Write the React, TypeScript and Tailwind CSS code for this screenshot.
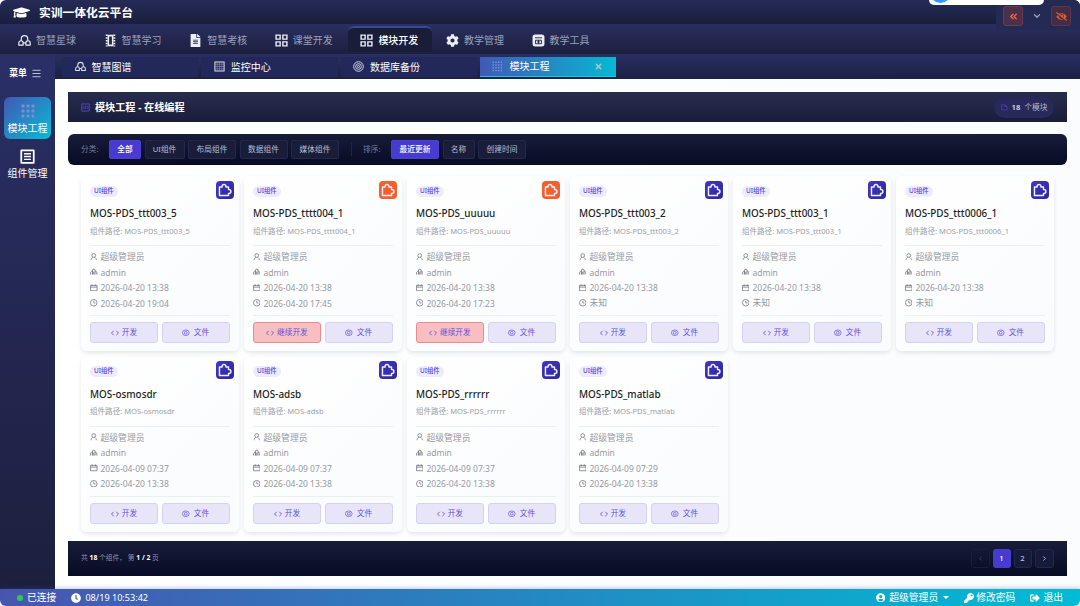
import React from "react";
import { FaGraduationCap, FaFileAlt, FaCog, FaUserCircle, FaKey, FaSignOutAlt, FaClock, FaEyeSlash } from "react-icons/fa";
import { ChevronDown, ChevronLeft, ChevronRight, ChevronsLeft, Menu, X } from "lucide-react";

type IconProps = { className?: string };

const Trefoil = ({ className }: IconProps) => (
  <svg viewBox="0 0 24 24" className={className} fill="none" stroke="currentColor" strokeWidth="2.2" strokeLinejoin="round">
    <path d="M6 12.500V9a6 6 0 0 1 12 0v3.500" />
    <path d="M1.500 20.500v-4a4 4 0 0 1 4-4h0a4 4 0 0 1 4 4v4zM14.500 20.500v-4a4 4 0 0 1 4-4h0a4 4 0 0 1 4 4v4z" />
    <path d="M9.500 16.500h5" />
  </svg>
);

const Grid4 = ({ className }: IconProps) => (
  <svg viewBox="0 0 24 24" className={className} fill="none" stroke="currentColor" strokeWidth="2.6">
    <path d="M2 2h7.5v7.5H2zM14.5 2H22v7.5h-7.5zM2 14.5h7.5V22H2zM14.5 14.5H22V22h-7.5z" />
  </svg>
);

const Film = ({ className }: IconProps) => (
  <svg viewBox="0 0 24 24" className={className} fill="none" stroke="currentColor">
    <path d="M8 3h8v18H8z" strokeWidth="2.8" />
    <path d="M5 1v22M19 1v22" strokeWidth="3.600" strokeDasharray="2.500 2.600" />
  </svg>
);

const Calculator = ({ className }: IconProps) => (
  <svg viewBox="0 0 24 24" className={className}>
    <rect x="1" y="1" width="22" height="22" rx="5" fill="currentColor" />
    <path d="M5.500 7h13M6.500 11.500h11v6.500h-11zM12 11v7M9 14.700h6" stroke="#20264a" strokeWidth="1.700" fill="none" />
  </svg>
);

const Table = ({ className }: IconProps) => (
  <svg viewBox="0 0 24 24" className={className} fill="none" stroke="currentColor">
    <path d="M2 2h20v20H2z" strokeWidth="2.2" />
    <path d="M7 3v18M12 3v18M17 3v18M3 7h18M3 12h18M3 17h18" strokeWidth="1" opacity="0.7" />
  </svg>
);

const Target = ({ className }: IconProps) => (
  <svg viewBox="0 0 24 24" className={className} fill="none" stroke="currentColor" strokeWidth="2">
    <circle cx="12" cy="12" r="10.5" />
    <circle cx="12" cy="12" r="6.2" />
    <circle cx="12" cy="12" r="2.2" />
  </svg>
);

const Dots = ({ className }: IconProps) => (
  <svg viewBox="0 0 24 24" className={className} fill="currentColor">
    {[1, 7, 13, 19].map((y) => [1, 7, 13, 19].map((x) => <rect key={`${x}-${y}`} x={x} y={y} width="3.4" height="3.4" rx="1" />))}
  </svg>
);

const Dots3 = ({ className }: IconProps) => (
  <svg viewBox="0 0 24 24" className={className} fill="currentColor">
    {[1, 9.5, 18].map((y) => [1, 9.5, 18].map((x) => <rect key={`${x}-${y}`} x={x} y={y} width="5" height="5" rx="1" />))}
  </svg>
);

const ListBox = ({ className }: IconProps) => (
  <svg viewBox="0 0 24 24" className={className} fill="none" stroke="currentColor">
    <path d="M2 2h20v20H2z" strokeWidth="2.8" strokeLinejoin="round" />
    <path d="M6.5 7.5h11M6.5 12h11M6.5 16.5h11" strokeWidth="2.2" />
  </svg>
);

const Puzzle = ({ className }: IconProps) => (
  <svg viewBox="0 0 24 24" className={className} fill="none" stroke="currentColor" strokeWidth="2.500" strokeLinejoin="round">
    <path d="M2.500 7H7V5.800a3.300 3.300 0 0 1 6.600 0V7H18v4.200h.7a3.400 3.400 0 0 1 0 6.800H18v3.500H2.500z" />
  </svg>
);

const Person = ({ className }: IconProps) => (
  <svg viewBox="0 0 24 24" className={className} fill="none" stroke="currentColor" strokeWidth="2.4">
    <circle cx="12" cy="8" r="6" />
    <path d="M3.500 23c0-4.500 2.500-7.500 6-9M20.500 23c0-4.500-2.500-7.500-6-9" />
  </svg>
);

const Group = ({ className }: IconProps) => (
  <svg viewBox="0 0 24 24" className={className} fill="none" stroke="currentColor" strokeWidth="2.800">
    <path d="M8 21V7.500a4 4 0 0 1 8 0V21M12 12v9M8 9.500c-3.500.5-6 3-6 6.500v5M16 9.500c3.500.5 6 3 6 6.500v5" />
  </svg>
);

const CalendarIcon = ({ className }: IconProps) => (
  <svg viewBox="0 0 24 24" className={className} fill="none" stroke="currentColor" strokeWidth="2.400">
    <path d="M1.500 4.500h21v17h-21zM1.500 10h21M7 1v6M17 1v6" />
  </svg>
);

const ClockIcon = ({ className }: IconProps) => (
  <svg viewBox="0 0 24 24" className={className} fill="none" stroke="currentColor" strokeWidth="2.400">
    <circle cx="12" cy="12" r="10.500" />
    <path d="M12 5.500V12.500h5.500" />
  </svg>
);

const Eye = ({ className }: IconProps) => (
  <svg viewBox="0 0 24 24" className={className} fill="none" stroke="currentColor" strokeWidth="2.200">
    <ellipse cx="12" cy="12" rx="10.800" ry="9" />
    <circle cx="12" cy="12" r="4.500" />
  </svg>
);

const CodeIcon = ({ className }: IconProps) => (
  <svg viewBox="0 0 24 24" className={className} fill="none" stroke="currentColor" strokeWidth="2.600">
    <path d="M8 5.500L1.500 12 8 18.500M16 5.500l6.500 6.500-6.500 6.500" />
  </svg>
);

const CodeBox = ({ className }: IconProps) => (
  <svg viewBox="0 0 24 24" className={className} fill="none" stroke="currentColor" strokeWidth="2.600">
    <path d="M2 2.500h20v19H2zM8.500 8L5 12l3.500 4M15.500 8l3.500 4-3.500 4M13.200 7l-2.400 10" />
  </svg>
);

const Box = ({ className }: IconProps) => (
  <svg viewBox="0 0 24 24" className={className} fill="none" stroke="currentColor" strokeWidth="2.800">
    <path d="M2 20V3h12l7 6v11H2M14 3v6h7" />
  </svg>
);

const navItems = [
  { label: "智慧星球", Icon: Trefoil },
  { label: "智慧学习", Icon: Film },
  { label: "智慧考核", Icon: FaFileAlt },
  { label: "课堂开发", Icon: Grid4 },
  { label: "模块开发", Icon: Grid4, active: true },
  { label: "教学管理", Icon: FaCog },
  { label: "教学工具", Icon: Calculator },
];

const tabs = [
  { label: "智慧图谱", Icon: Trefoil },
  { label: "监控中心", Icon: Table },
  { label: "数据库备份", Icon: Target },
  { label: "模块工程", Icon: Dots, active: true },
];

type Module = { name: string; created: string; updated: string; resume?: boolean };

const modules: Module[] = [
  { name: "MOS-PDS_ttt003_5", created: "2026-04-20 13:38", updated: "2026-04-20 19:04" },
  { name: "MOS-PDS_tttt004_1", created: "2026-04-20 13:38", updated: "2026-04-20 17:45", resume: true },
  { name: "MOS-PDS_uuuuu", created: "2026-04-20 13:38", updated: "2026-04-20 17:23", resume: true },
  { name: "MOS-PDS_ttt003_2", created: "2026-04-20 13:38", updated: "未知" },
  { name: "MOS-PDS_ttt003_1", created: "2026-04-20 13:38", updated: "未知" },
  { name: "MOS-PDS_ttt0006_1", created: "2026-04-20 13:38", updated: "未知" },
  { name: "MOS-osmosdr", created: "2026-04-09 07:37", updated: "2026-04-20 13:38" },
  { name: "MOS-adsb", created: "2026-04-09 07:37", updated: "2026-04-20 13:38" },
  { name: "MOS-PDS_rrrrrr", created: "2026-04-09 07:37", updated: "2026-04-20 13:38" },
  { name: "MOS-PDS_matlab", created: "2026-04-09 07:29", updated: "2026-04-20 13:38" },
];

function FilterButton({ label, width, active }: { label: string; width: string; active?: boolean }) {
  return (
    <button
      className={`flex h-[19px] ${width} shrink-0 items-center justify-center rounded-[2px] border pt-px text-[7.7px] ${
        active ? "border-[#4c40d8] bg-[#473bd0] font-medium text-white" : "border-[#23284a] bg-[#191d3a] text-[#b8bdd4]"
      }`}
    >
      {label}
    </button>
  );
}

function MetaRow({ Icon, text }: { Icon: React.ComponentType<IconProps>; text: string }) {
  const latin = /^[\x20-\x7e]+$/.test(text);
  return (
    <div className="flex h-[15.4px] items-center gap-[3px] text-[#979aa3]">
      <Icon className="mb-[2px] size-[7.5px] shrink-0 text-[#70727a]" />
      <span className={latin ? "text-[8.5px]" : "text-[8.8px]"}>{text}</span>
    </div>
  );
}

function ModuleCard({ m }: { m: Module }) {
  return (
    <article className="flex h-[175px] flex-col rounded-[6px] bg-gradient-to-br from-white to-[#fafbfd] px-[9px] shadow-[0_2px_4px_rgba(30,30,60,0.11)]">
      <div className="flex h-[26px] shrink-0 items-center justify-between">
        <span className="mt-[4px] flex h-[11px] items-center rounded-full bg-[#eeebfd] px-[4px] text-[6.4px] font-medium text-[#5546dc]">UI组件</span>
        <span
          className={`mt-px -mr-[4.500px] flex size-[18px] items-center justify-center rounded-[4px] text-[#f1efff] ${
            m.resume ? "bg-[#f55f2c]" : "bg-gradient-to-br from-[#4035c8] to-[#2f289a]"
          }`}
        >
          <Puzzle className="size-[14px]" />
        </span>
      </div>
      <h3 className="mt-[3px] h-[16px] text-[9.9px] leading-[16px] font-medium whitespace-nowrap text-[#1c1e24]">{m.name}</h3>
      <p className="mt-[3.500px] h-[12px] text-[7.55px] leading-[12px] whitespace-nowrap text-[#9c9fa8]">组件路径: {m.name}</p>
      <div className="mt-[8.500px] h-[71px] shrink-0 border-y border-[#edeef2] pt-[4px]">
        <MetaRow Icon={Person} text="超级管理员" />
        <MetaRow Icon={Group} text="admin" />
        <MetaRow Icon={CalendarIcon} text={m.created} />
        <MetaRow Icon={ClockIcon} text={m.updated} />
      </div>
      <div className="mt-[6px] grid grid-cols-2 gap-[4px] text-[7.7px] text-[#6150dd]">
        <button className={`flex h-[21px] items-center justify-center gap-[3px] rounded-[3px] border pt-px ${m.resume ? "border-[#ec8a8c] bg-[#f7bfc2]" : "border-[#d5d1f3] bg-[#e8e5f8]"}`}>
          <CodeIcon className="size-[8px]" />
          {m.resume ? "继续开发" : "开发"}
        </button>
        <button className="flex h-[21px] items-center justify-center gap-[4px] rounded-[3px] border border-[#d5d1f3] bg-[#e8e5f8] pt-px">
          <Eye className="size-[7.5px]" />
          文件
        </button>
      </div>
    </article>
  );
}

export default function App() {
  return (
    <div className="flex h-[606px] w-[1080px] flex-col overflow-hidden bg-[#fcfdfe] font-['Noto_Sans','Noto_Sans_CJK_SC',sans-serif] leading-none">
      <header className="relative flex h-6 shrink-0 items-center rounded-t-[6px] bg-gradient-to-b from-[#262b57] to-[#1a1e3d] pl-[13px] text-white">
        <FaGraduationCap className="size-[17px]" />
        <h1 className="mt-[2px] ml-[9px] text-[11.75px] font-bold">实训一体化云平台</h1>
        <div className="absolute top-0 right-0 z-10 flex h-[30px] w-[84px] items-center gap-[8px] rounded-tr-[6px] bg-[#252a54] pt-[2px] pl-[7px]">
          <span className="flex size-5 items-center justify-center rounded-[3px] border border-[#6e3a50] bg-[#4b304c] text-[#f26a3a]">
            <ChevronsLeft className="size-[11px]" strokeWidth={3} />
          </span>
          <ChevronDown className="mx-px size-[10px] text-[#9ba1bd]" strokeWidth={3} />
          <span className="flex size-5 items-center justify-center rounded-[3px] border border-[#5f354a] bg-[#432c48] text-[#e4612f]">
            <FaEyeSlash className="size-[11px]" />
          </span>
        </div>
        <div className="absolute top-0 left-[929px] z-20 h-[5px] w-[115px] overflow-hidden rounded-b-[10px] bg-white">
          <div className="-mt-[18px] ml-[1px] size-[21px] rounded-full bg-[#2f9df4]" />
        </div>
      </header>

      <nav className="flex h-[30px] shrink-0 items-end bg-gradient-to-b from-[#2a2f60] to-[#1c203e] pl-[6px]">
        {navItems.map(({ label, Icon, active }) => (
          <a
            key={label}
            className={`flex items-center gap-[5px] text-[10px] whitespace-nowrap ${
              active
                ? "mr-[2px] mb-[2px] h-[26px] w-[83.600px] rounded-t-[6px] border-t-2 border-[#3a479a] bg-[#191d38] pl-[12px] font-medium text-white"
                : "h-[28px] w-[85.6px] pl-[12px] text-[#9ca1bb]"
            }`}
          >
            <Icon className="size-[13px] shrink-0 text-[#eceef6]" />
            {label}
          </a>
        ))}
      </nav>

      <div className="flex min-h-0 flex-1">
        <aside className="flex w-[55px] shrink-0 flex-col items-center bg-gradient-to-b from-[#2a2f66] to-[#1c203e] text-[10px] text-white">
          <div className="mt-[13px] -ml-[4px] flex h-[12px] items-center gap-[4px] text-[8.8px] font-bold">
            菜单 <Menu className="size-[11px] text-[#c8cce0]" />
          </div>
          <a className="mt-[18px] flex h-[42px] w-[47px] flex-col items-center rounded-[6px] bg-[linear-gradient(135deg,#4357b4,#08bcd4)] pt-[7px]">
            <Dots3 className="size-[14px] text-[#7f8bd6]" />
            <span className="mt-[5px]">模块工程</span>
          </a>
          <a className="mt-[10px] flex flex-col items-center">
            <ListBox className="size-[15px]" />
            <span className="mt-[4px]">组件管理</span>
          </a>
        </aside>

        <div className="flex min-w-0 flex-1 flex-col">
          <div className="flex h-[25px] shrink-0 items-center gap-[3px] bg-gradient-to-b from-[#2a2f64] to-[#1c2042] pl-[7px]">
            {tabs.map(({ label, Icon, active }) => (
              <div
                key={label}
                className={`flex h-[20px] w-[136.3px] items-center gap-[6px] pl-[12.500px] text-[10px] text-white ${
                  active ? "border-b border-[#18c8e0] bg-[linear-gradient(90deg,#4259b5,#06b9d3)]" : "bg-[#22285a]"
                }`}
              >
                <Icon className={`size-[11px] ${active ? "text-[#7f93dc]" : "text-[#dfe2f0]"}`} />
                {label}
                {active && <X className="mr-[13px] ml-auto size-[9px] text-[#b5c5c4]" strokeWidth={4} />}
              </div>
            ))}
          </div>

          <main className="flex min-h-0 flex-1 flex-col bg-gradient-to-r from-white to-[#fafcfd] pt-[13px] pr-[13px] pl-[13px]">
            <section className="flex h-[30px] shrink-0 items-center justify-between bg-gradient-to-b from-[#272d4f] to-[#191d3a] pr-[13px] pl-[13px] text-white">
              <h2 className="flex items-center gap-[5px] text-[10.15px] font-bold">
                <CodeBox className="size-[9px] text-[#4f43dc]" />
                <span className="pt-px">模块工程 - 在线编程</span>
              </h2>
              <div className="flex h-[21px] w-[60px] items-center justify-center gap-[4px] rounded-full bg-[#28295a] pt-px text-[7.7px] text-[#b5b9d0]">
                <Box className="size-[7px] text-[#4639c8]" />
                <b className="font-semibold text-[#dcdff0]">18</b> 个模块
              </div>
            </section>

            <section className="mt-[12px] flex h-[31px] shrink-0 items-center gap-[3.5px] rounded-[6px] bg-gradient-to-b from-[#181c39] to-[#080b25] pl-[13px]">
              <span className="w-[24.5px] pt-px text-[7.7px] text-[#777d9b]">分类:</span>
              <FilterButton label="全部" width="w-[32px]" active />
              <FilterButton label="UI组件" width="w-[40px]" />
              <FilterButton label="布局组件" width="w-[48px]" />
              <FilterButton label="数据组件" width="w-[48px]" />
              <FilterButton label="媒体组件" width="w-[48px]" />
              <span className="mx-[8px] h-[13px] w-px bg-[#20254a]" />
              <span className="w-[24.5px] pt-px text-[7.7px] text-[#777d9b]">排序:</span>
              <FilterButton label="最近更新" width="w-[48px]" active />
              <FilterButton label="名称" width="w-[32px]" />
              <FilterButton label="创建时间" width="w-[48px]" />
            </section>

            <section className="mt-[11px] grid h-[356px] shrink-0 grid-cols-[repeat(6,157.6px)] content-start gap-x-[5.4px] gap-y-[5.5px] pl-[13px]">
              {modules.map((m) => (
                <ModuleCard key={m.name} m={m} />
              ))}
            </section>

            <footer className="mt-[9px] flex h-[35px] shrink-0 items-center justify-between bg-gradient-to-b from-[#181c39] to-[#080b25] px-[13px]">
              <p className="text-[6.75px] text-[#8c91aa]">
                共 <b className="text-white">18</b> 个组件， 第 <b className="text-white">1 / 2</b> 页
              </p>
              <div className="flex items-center gap-[3px] text-[7.6px] font-medium text-[#c0c4da]">
                <span className="flex h-[19px] w-[19px] items-center justify-center rounded-[3px] border border-[#181d3d] text-[#50567a]">
                  <ChevronLeft className="size-[7px]" />
                </span>
                <span className="flex h-[19px] w-[18px] items-center justify-center rounded-[3px] bg-[#473bd0] text-white">1</span>
                <span className="flex h-[19px] w-[18px] items-center justify-center rounded-[3px] border border-[#22284c] bg-[#161a3b]">2</span>
                <span className="flex h-[19px] w-[19.500px] items-center justify-center rounded-[3px] border border-[#22284c] bg-[#161a3b]">
                  <ChevronRight className="size-[7px]" strokeWidth={3} />
                </span>
              </div>
            </footer>
          </main>
        </div>
      </div>

      <footer className="flex h-[17px] shrink-0 items-center rounded-b-[6px] bg-[linear-gradient(90deg,#4855b0,#00bcd4)] pr-[17px] pl-[17px] text-[9.8px] text-white shadow-[0_-1px_4px_rgba(40,80,160,0.3)]">
        <span className="size-[6px] rounded-full bg-[#29cc4c]" />
        <span className="ml-[4px]">已连接</span>
        <FaClock className="ml-[15px] size-[10px]" />
        <span className="ml-[4px] text-[9.1px]">08/19 10:53:42</span>
        <div className="ml-auto flex items-center">
          <FaUserCircle className="size-[9.5px]" />
          <span className="ml-[4px]">超级管理员</span>
          <span className="ml-[5px] border-x-[3px] border-t-[3px] border-x-transparent border-t-white" />
          <FaKey className="ml-[15px] size-[10px]" />
          <span className="ml-[2px]">修改密码</span>
          <FaSignOutAlt className="ml-[15px] size-[10px]" />
          <span className="ml-[3px]">退出</span>
        </div>
      </footer>
    </div>
  );
}
